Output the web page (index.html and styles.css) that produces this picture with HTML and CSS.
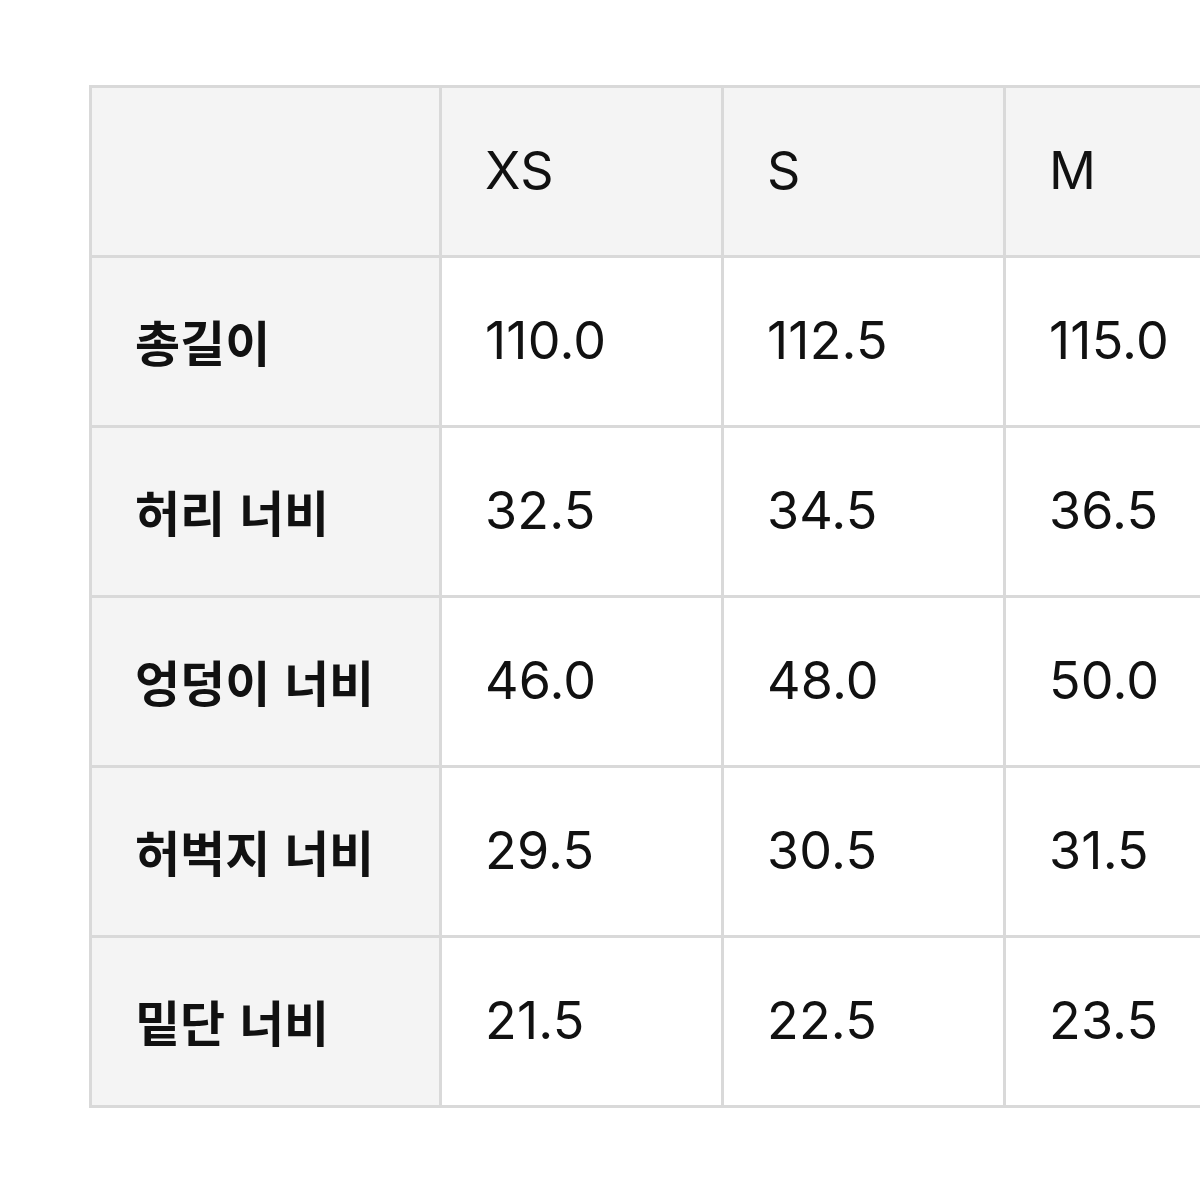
FILE: index.html
```html
<!DOCTYPE html>
<html lang="ko">
<head>
<meta charset="utf-8">
<link rel="stylesheet" href="styles.css">
</head>
<body>
<div class="page">
  <div class="table">
    <div class="cell head"></div>
    <div class="cell head">XS</div>
    <div class="cell head">S</div>
    <div class="cell head">M</div>

    <div class="cell label">총길이</div>
    <div class="cell">110.0</div>
    <div class="cell">112.5</div>
    <div class="cell">115.0</div>

    <div class="cell label">허리 너비</div>
    <div class="cell">32.5</div>
    <div class="cell">34.5</div>
    <div class="cell">36.5</div>

    <div class="cell label">엉덩이 너비</div>
    <div class="cell">46.0</div>
    <div class="cell">48.0</div>
    <div class="cell">50.0</div>

    <div class="cell label">허벅지 너비</div>
    <div class="cell">29.5</div>
    <div class="cell">30.5</div>
    <div class="cell">31.5</div>

    <div class="cell label">밑단 너비</div>
    <div class="cell">21.5</div>
    <div class="cell">22.5</div>
    <div class="cell">23.5</div>
  </div>
</div>
</body>
</html>
```
FILE: styles.css
```css
html, body {
  margin: 0;
  padding: 0;
  background: #ffffff;
  overflow: hidden;
}
.page {
  width: 1200px;
  height: 1200px;
  overflow: hidden;
  padding: 85px 0 0 89px;
  box-sizing: border-box;
}
.table {
  display: grid;
  grid-template-columns: 347px 279px 279px 279px;
  grid-auto-rows: 167px;
  gap: 3px;
  padding: 3px;
  width: max-content;
  background: #d9d9d9;
  font-family: Inter, "Noto Sans CJK KR", sans-serif;
  color: #111111;
}
.cell {
  background: #ffffff;
  display: flex;
  align-items: center;
  padding-left: 43px;
  padding-bottom: 3px;
  font-size: 52px;
  font-weight: 400;
  letter-spacing: 0.2px;
}
.head {
  background: #f4f4f4;
}
.label {
  background: #f4f4f4;
  font-family: "Noto Sans CJK KR", sans-serif;
  font-weight: 700;
  font-size: 49px;
  letter-spacing: 0;
}
```
